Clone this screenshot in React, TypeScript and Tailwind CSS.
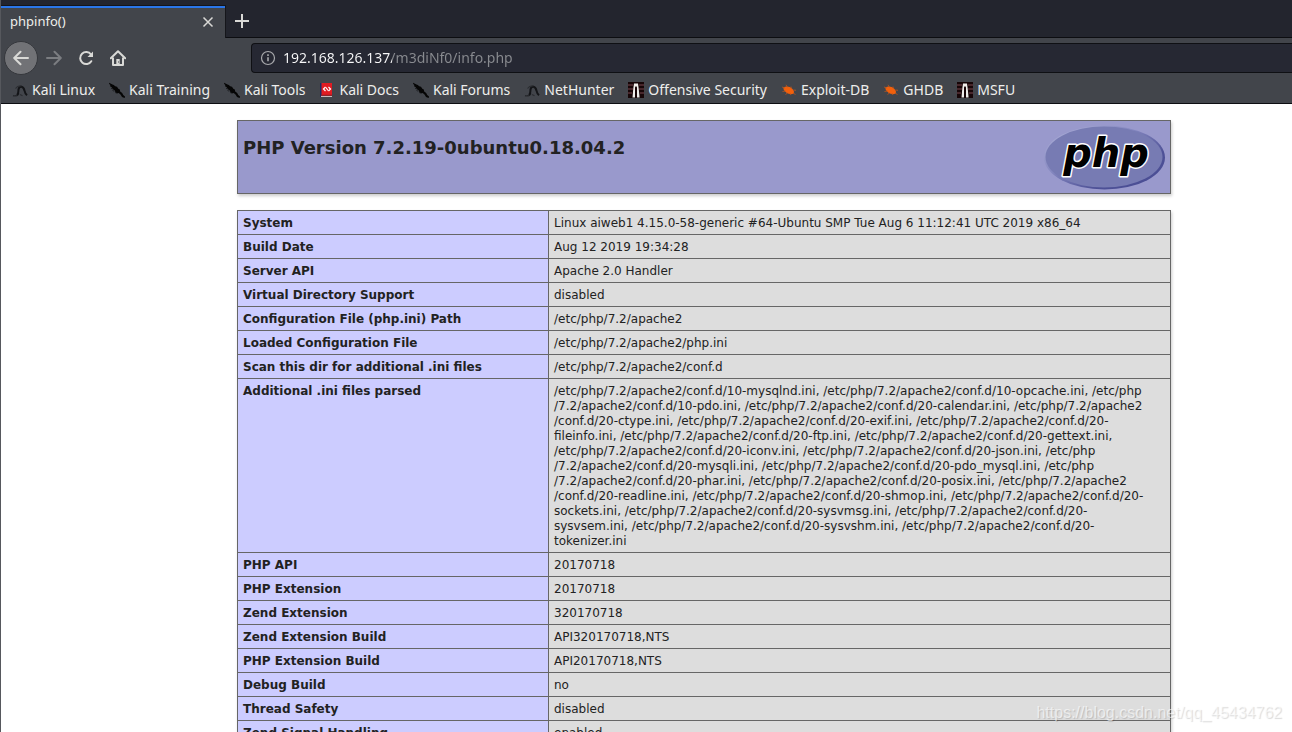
import type { ReactNode } from "react";

const rows: { name: string; value: string[] }[] = [
  { name: "System", value: ["Linux aiweb1 4.15.0-58-generic #64-Ubuntu SMP Tue Aug 6 11:12:41 UTC 2019 x86_64"] },
  { name: "Build Date", value: ["Aug 12 2019 19:34:28"] },
  { name: "Server API", value: ["Apache 2.0 Handler"] },
  { name: "Virtual Directory Support", value: ["disabled"] },
  { name: "Configuration File (php.ini) Path", value: ["/etc/php/7.2/apache2"] },
  { name: "Loaded Configuration File", value: ["/etc/php/7.2/apache2/php.ini"] },
  { name: "Scan this dir for additional .ini files", value: ["/etc/php/7.2/apache2/conf.d"] },
  {
    name: "Additional .ini files parsed",
    value: [
      "/etc/php/7.2/apache2/conf.d/10-mysqlnd.ini, /etc/php/7.2/apache2/conf.d/10-opcache.ini, /etc/php",
      "/7.2/apache2/conf.d/10-pdo.ini, /etc/php/7.2/apache2/conf.d/20-calendar.ini, /etc/php/7.2/apache2",
      "/conf.d/20-ctype.ini, /etc/php/7.2/apache2/conf.d/20-exif.ini, /etc/php/7.2/apache2/conf.d/20-",
      "fileinfo.ini, /etc/php/7.2/apache2/conf.d/20-ftp.ini, /etc/php/7.2/apache2/conf.d/20-gettext.ini,",
      "/etc/php/7.2/apache2/conf.d/20-iconv.ini, /etc/php/7.2/apache2/conf.d/20-json.ini, /etc/php",
      "/7.2/apache2/conf.d/20-mysqli.ini, /etc/php/7.2/apache2/conf.d/20-pdo_mysql.ini, /etc/php",
      "/7.2/apache2/conf.d/20-phar.ini, /etc/php/7.2/apache2/conf.d/20-posix.ini, /etc/php/7.2/apache2",
      "/conf.d/20-readline.ini, /etc/php/7.2/apache2/conf.d/20-shmop.ini, /etc/php/7.2/apache2/conf.d/20-",
      "sockets.ini, /etc/php/7.2/apache2/conf.d/20-sysvmsg.ini, /etc/php/7.2/apache2/conf.d/20-",
      "sysvsem.ini, /etc/php/7.2/apache2/conf.d/20-sysvshm.ini, /etc/php/7.2/apache2/conf.d/20-",
      "tokenizer.ini",
    ],
  },
  { name: "PHP API", value: ["20170718"] },
  { name: "PHP Extension", value: ["20170718"] },
  { name: "Zend Extension", value: ["320170718"] },
  { name: "Zend Extension Build", value: ["API320170718,NTS"] },
  { name: "PHP Extension Build", value: ["API20170718,NTS"] },
  { name: "Debug Build", value: ["no"] },
  { name: "Thread Safety", value: ["disabled"] },
  { name: "Zend Signal Handling", value: ["enabled"] },
];

function Favicon({ children }: { children: ReactNode }) {
  return (
    <svg className="w-4 h-4 shrink-0" viewBox="0 0 16 16" fill="none" aria-hidden="true">
      {children}
    </svg>
  );
}

function KaliIcon() {
  return (
    <Favicon>
      <path d="M1 13.800c3 .4 5.200-.6 5.800-2.600" stroke="#26282c" strokeWidth="1.400" />
      <path d="M5 13c1.800-1.500 1.200-3.500 1.500-5.500.3-1.800 1.500-3 3-2.800 2 .3 2.600 2 3 4 .3 1.700 1 3.300 2.500 4.500" stroke="#141518" strokeWidth="2" />
      <path d="M3.500 6.500C5 4.500 7 3.500 9.500 4M8 12.500l2.500 1.300" stroke="#2b2d31" strokeWidth="1.200" />
    </Favicon>
  );
}

function DragonIcon() {
  return (
    <Favicon>
      <path d="M0 .8 3.500 2.500l1.300.5 1.400 1.300 1.800.5 1.300 2 1.500.7.400 2 2 1.500 1 2 1.900 1.700-.5 1.300-2.600-1-1.300-2.300-2-1.600-1.900.3-1.400-1.400-.8-1.700-1.800-1L2.500 5 1 4.300 1.400 3 .2 2z" fill="#050505" />
      <path d="m3.500 8.500 1.800.7M6 10.500l1.500.4M2 6.300l1.500.5" stroke="#1c1d20" strokeWidth=".9" />
    </Favicon>
  );
}

function DocsIcon() {
  return (
    <Favicon>
      <path d="M1 1h2v14H1z" fill="#1f2c63" />
      <path d="M2.500 1H13v12H2.500z" fill="#e01b22" />
      <path d="M2 13.500h11V15H2z" fill="#c9b9bc" />
      <path d="M2 12.800h11v1H2z" fill="#8d1118" />
      <path d="M6.500 5 4.500 7l2 2M9.500 5l2 2-2 2M7 5.500l2 3" stroke="#fff" strokeWidth="1.200" />
    </Favicon>
  );
}

function OffsecIcon() {
  return (
    <Favicon>
      <path d="M0 0h16v16H0z" fill="#170608" />
      <path d="M0 3h5M11 3h5M0 7h5M11 7h5M0 11h4M12 11h4" stroke="#5a3338" strokeWidth="1.500" />
      <path d="M6 1.500h4l.7 5 .9 9H9V5.500L8 5l-1 .5v10H4.500l.8-9z" fill="#efedeb" />
      <path d="M7.200 4.500h1.600v11H7.200z" fill="#170608" />
    </Favicon>
  );
}

function ExploitIcon() {
  return (
    <Favicon>
      <path d="M2.500 5.500C5 3.800 9 4.500 11 6.500s2.500 3.500 1.500 5c-2 1.200-5 .7-7-.8S2 7.500 2.500 5.500z" fill="#f2600c" />
      <path d="m1 5 3 1M5 2.800l1.500 2.500M1.500 9.500l3-.5M4.500 12.500l2-1.500M10 4.500l.3 2M12.500 8l2.500.3M12 11l2.500 1.500M9 11l.5 2" stroke="#b9571f" strokeWidth=".8" />
    </Favicon>
  );
}

const bookmarks = [
  { label: "Kali Linux", icon: <KaliIcon /> },
  { label: "Kali Training", icon: <DragonIcon /> },
  { label: "Kali Tools", icon: <DragonIcon /> },
  { label: "Kali Docs", icon: <DocsIcon /> },
  { label: "Kali Forums", icon: <DragonIcon /> },
  { label: "NetHunter", icon: <KaliIcon /> },
  { label: "Offensive Security", icon: <OffsecIcon /> },
  { label: "Exploit-DB", icon: <ExploitIcon /> },
  { label: "GHDB", icon: <ExploitIcon /> },
  { label: "MSFU", icon: <OffsecIcon /> },
];

function PhpLogo() {
  return (
    <svg className="w-[121px] h-[65px] shrink-0 overflow-visible" viewBox="0 0 121 65" role="img" aria-label="PHP logo">
      <defs>
        <linearGradient id="rim" x1="0" y1="0" x2="1" y2="1">
          <stop offset="0" stopColor="#b4b6dc" />
          <stop offset="0.4" stopColor="#8487bf" />
          <stop offset="0.7" stopColor="#4e5197" />
          <stop offset="1" stopColor="#484b92" />
        </linearGradient>
      </defs>
      <ellipse cx="60.500" cy="32.500" rx="60.500" ry="32" fill="url(#rim)" />
      <ellipse cx="60" cy="32" rx="58.500" ry="30.500" fill="#777bb3" />
      <text
        x="62"
        y="42"
        textAnchor="middle"
        className="font-['DejaVu_Sans'] font-bold italic text-[40px]"
        fill="#000"
        stroke="#fff"
        strokeWidth="3"
        strokeLinejoin="round"
        paintOrder="stroke"
      >
        php
      </text>
    </svg>
  );
}

export default function App() {
  return (
    <div className="relative h-screen flex flex-col overflow-hidden bg-white border-l border-[#56585d] font-['Noto_Sans',sans-serif]">
      {/* Tab strip */}
      <div className="flex items-end h-[38px] shrink-0 bg-[#23252e] border-b border-[#0c0d11]">
        <div className="flex items-center justify-between w-56 h-8 -mb-px pl-[9px] pr-[11px] pb-0.5 shrink-0 bg-[#42454b] border-t-2 border-[#2a76e8] outline-1 outline-[#15161b] text-[13px] text-[#eeeeec]">
          <span>phpinfo()</span>
          <button aria-label="Close tab" className="text-[#d9d9d6]">
            <svg className="w-3 h-3" viewBox="0 0 12 12" stroke="currentColor" strokeWidth="1.500">
              <path d="m1.500 1.500 9 9M10.500 1.500l-9 9" />
            </svg>
          </button>
        </div>
        <button aria-label="New tab" className="w-[34px] h-8 flex items-center justify-center text-[#d9d9d6]">
          <svg className="w-4 h-4" viewBox="0 0 16 16" stroke="currentColor" strokeWidth="2">
            <path d="M8 1v14M1 8h14" />
          </svg>
        </button>
      </div>

      {/* Toolbar */}
      <div className="flex items-center h-10 shrink-0 pl-[3px] bg-[#42454b] text-[#d9d9d6]">
        <button aria-label="Back" className="w-[34px] h-[34px] rounded-full bg-[#717276] border border-[#35373c] flex items-center justify-center">
          <svg className="w-4 h-4" viewBox="0 0 16 16" fill="none" stroke="currentColor" strokeWidth="2" strokeLinecap="round" strokeLinejoin="round">
            <path d="M15 8H1.500M7.500 1.700 1.200 8l6.300 6.300" />
          </svg>
        </button>
        <button aria-label="Forward" className="w-8 h-8 flex items-center justify-center text-[#7b7d81]">
          <svg className="w-4 h-4" viewBox="0 0 16 16" fill="none" stroke="currentColor" strokeWidth="2" strokeLinecap="round" strokeLinejoin="round">
            <path d="M1 8h13.500M8.500 1.700 14.800 8l-6.300 6.300" />
          </svg>
        </button>
        <button aria-label="Reload" className="w-8 h-8 flex items-center justify-center">
          <svg className="w-4 h-4" viewBox="0 0 16 16" fill="none" stroke="currentColor" strokeWidth="2">
            <path d="M13 4.500A6 6 0 1 0 13.300 11.200" strokeLinecap="round" />
            <path d="M15 1.500V7H9.500z" fill="currentColor" stroke="none" />
          </svg>
        </button>
        <button aria-label="Home" className="w-8 h-8 flex items-center justify-center">
          <svg className="w-4 h-4" viewBox="0 0 16 16" fill="none" stroke="currentColor" strokeWidth="2" strokeLinejoin="round">
            <path d="M.8 8.300 8 1.200l7.200 7.100" strokeLinecap="round" />
            <path d="M3 7.500V15h10V7.500" />
            <path d="M6.300 15V9h3.400v6z" fill="currentColor" stroke="none" />
            <path d="M8 11.500h1v1H8z" fill="#42454b" stroke="none" />
          </svg>
        </button>
        <div className="flex items-center flex-1 h-[30px] ml-[117px] pl-2 gap-[7px] bg-[#262833] border border-r-0 border-[#0f1014] rounded-l">
          <svg className="w-4 h-4 shrink-0" viewBox="0 0 16 16" fill="none" stroke="#a9aaad" aria-hidden="true">
            <circle cx="8" cy="8" r="6.500" strokeWidth="1.200" />
            <path d="M8 7.200v4M8 4.300v1.600" strokeWidth="1.600" />
          </svg>
          <input
            type="text"
            aria-label="Address"
            defaultValue="192.168.126.137/m3diNf0/info.php"
            className="flex-1 min-w-0 h-6 pb-0.5 text-sm outline-none text-transparent bg-clip-text bg-[linear-gradient(90deg,#f9f9fa_109px,#898b90_109px)]"
          />
        </div>
      </div>

      {/* Bookmarks */}
      <nav className="flex items-center gap-3.5 h-[26px] shrink-0 pl-[11px] pb-0.5 bg-[#42454b] border-b border-[#0c0d11] text-sm text-[#eeeeec]">
        {bookmarks.map((b) => (
          <a key={b.label} href="#" className="flex items-center gap-1 shrink-0 whitespace-nowrap">
            {b.icon}
            {b.label}
          </a>
        ))}
      </nav>

      {/* Page */}
      <main className="flex-1 min-h-0 overflow-hidden pl-[236px] pt-4 font-['DejaVu_Sans',sans-serif] text-xs text-[#222]">
        <div className="w-[934px]">
          <header className="flex items-start justify-between h-[74px] px-[5px] py-1 bg-[#9999cc] border border-[#666] shadow-[1px_2px_3px_#ccc]">
            <h1 className="mt-3 text-lg leading-[21px] font-bold">PHP Version 7.2.19-0ubuntu0.18.04.2</h1>
            <PhpLogo />
          </header>
          <table className="w-full mt-4 border-collapse shadow-[1px_2px_3px_#ccc] leading-[15px]">
            <tbody>
              {rows.map((row) => (
                <tr key={row.name}>
                  <th scope="row" className="w-[311px] px-[5px] pt-[5px] pb-[3px] border border-[#666] bg-[#ccccff] text-left align-top font-bold">
                    {row.name}
                  </th>
                  <td className="px-[5px] pt-[5px] pb-[3px] border border-[#666] bg-[#dddddd] align-top">
                    {row.value.map((line) => (
                      <span key={line} className="block whitespace-nowrap">
                        {line}
                      </span>
                    ))}
                  </td>
                </tr>
              ))}
            </tbody>
          </table>
        </div>
      </main>

      {/* Watermark */}
      <span className="absolute right-2.5 bottom-[7px] font-['Liberation_Sans',sans-serif] text-base text-white/60 [text-shadow:1px_1px_1px_rgba(0,0,0,0.15)]">
        https://blog.csdn.net/qq_45434762
      </span>
    </div>
  );
}
